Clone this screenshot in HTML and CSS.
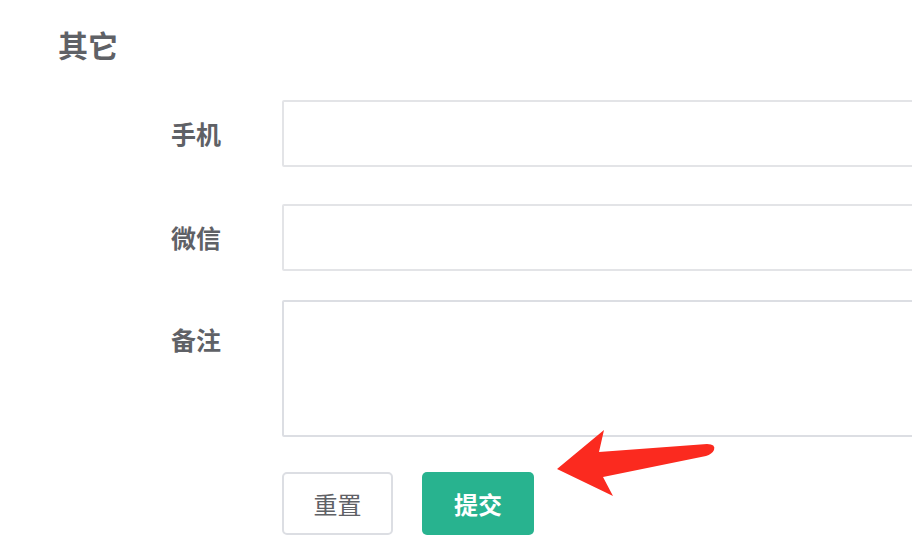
FILE: index.html
```html
<!DOCTYPE html>
<html lang="zh">
<head>
<meta charset="utf-8">
<title>其它</title>
<link rel="stylesheet" href="styles.css">
</head>
<body>
<div class="page">
  <h2 class="section-title">其它</h2>
  <form class="form">
    <div class="form-row row-phone">
      <label class="form-label">手机</label>
      <input class="form-input" type="text">
    </div>
    <div class="form-row row-wechat">
      <label class="form-label">微信</label>
      <input class="form-input" type="text">
    </div>
    <div class="form-row row-note">
      <label class="form-label label-top">备注</label>
      <textarea class="form-textarea"></textarea>
    </div>
    <div class="form-row row-actions">
      <span class="form-label"></span>
      <div class="actions">
        <button type="button" class="btn btn-default">重置</button>
        <button type="button" class="btn btn-primary">提交</button>
      </div>
    </div>
  </form>
  <svg class="annot-arrow" width="180" height="80" viewBox="540 420 180 80">
    <path d="M557,469 L604,430 L599,452 L707,444 Q716,444 714,450 Q712,454 706,456 L603,477 L613,496 Z" fill="#fb2a1f"/>
  </svg>
</div>
</body>
</html>
```
FILE: styles.css
```css
html, body {
  margin: 0;
  padding: 0;
  background: #ffffff;
  overflow: hidden;
}
body {
  width: 912px;
  height: 556px;
  font-family: "Noto Sans CJK SC", "Noto Sans", sans-serif;
  color: #606266;
}
.page {
  position: relative;
  padding: 25px 0 0 58px;
  height: 100%;
  box-sizing: border-box;
}
.section-title {
  margin: 0;
  font-size: 30px;
  line-height: 38px;
  font-weight: 700;
  color: #5f6166;
}
.form {
  margin: 37px 0 0 113px;
  display: flex;
  flex-direction: column;
}
.form-row {
  display: flex;
  align-items: flex-start;
}
.row-phone { margin-bottom: 37px; }
.row-wechat { margin-bottom: 29px; }
.row-note { margin-bottom: 35px; }
.form-label {
  width: 111px;
  flex: none;
  font-size: 25px;
  line-height: 67px;
  font-weight: 700;
  color: #5f6166;
}
.label-top {
  padding-top: 6px;
}
.form-input,
.form-textarea {
  width: 632px;
  flex: none;
  box-sizing: border-box;
  border: 2px solid #e3e4e7;
  border-radius: 2px;
  background: #fff;
  margin: 0;
  padding: 0 14px;
  font: inherit;
  outline: none;
}
.form-input {
  height: 67px;
}
.form-textarea {
  height: 137px;
  resize: none;
  border-color: #dcdee3;
}
.actions {
  display: flex;
  gap: 29px;
}
.btn {
  box-sizing: border-box;
  height: 63px;
  font-family: inherit;
  font-size: 24px;
  border-radius: 5px;
  padding: 0;
  cursor: pointer;
}
.btn-default {
  width: 111px;
  background: #fff;
  border: 2px solid #dcdee3;
  color: #5f6166;
}
.btn-primary {
  width: 112px;
  background: #28b38f;
  border: none;
  color: #fff;
  font-weight: 700;
}
.annot-arrow {
  position: absolute;
  left: 540px;
  top: 420px;
}
```
